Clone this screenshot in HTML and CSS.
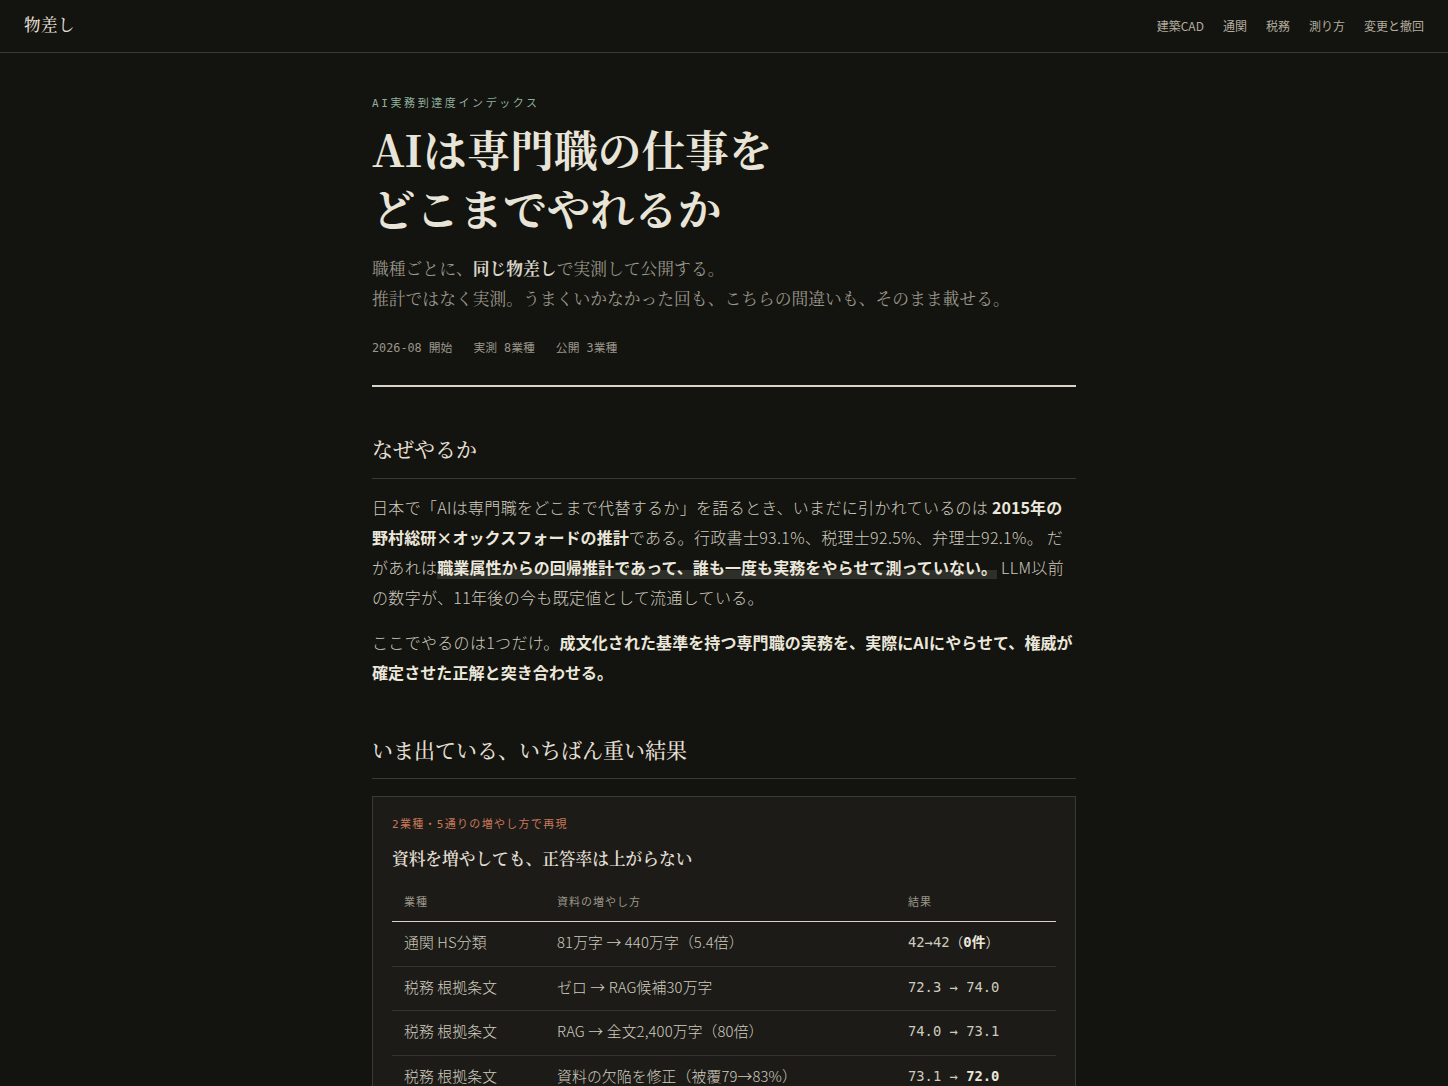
FILE: index.html
```html
<!DOCTYPE html>
<html lang="ja">
<head>
<meta charset="utf-8">
<title>物差し</title>
<link rel="stylesheet" href="styles.css">
</head>
<body>
<header class="site-header">
  <div class="logo">物差し</div>
  <nav class="nav">
    <a href="#">建築CAD</a>
    <a href="#">通関</a>
    <a href="#">税務</a>
    <a href="#">測り方</a>
    <a href="#">変更と撤回</a>
  </nav>
</header>
<main class="main">
  <section class="hero">
    <p class="eyebrow">AI実務到達度インデックス</p>
    <h1 class="title">AIは専門職の仕事を<br>どこまでやれるか</h1>
    <p class="lead">職種ごとに、<strong>同じ物差し</strong>で実測して公開する。<br>推計ではなく実測。うまくいかなかった回も、こちらの間違いも、そのまま載せる。</p>
    <div class="meta"><span>2026-08 開始</span><span>実測 8業種</span><span>公開 3業種</span></div>
  </section>

  <section class="section">
    <h2 class="section-title">なぜやるか</h2>
    <p class="body">日本で「AIは専門職をどこまで代替するか」を語るとき、いまだに引かれているのは <strong>2015年の野村総研×オックスフォードの推計</strong>である。行政書士93.1%、税理士92.5%、弁理士92.1%。 だがあれは<strong class="mark">職業属性からの回帰推計であって、誰も一度も実務をやらせて測っていない。</strong> LLM以前の数字が、11年後の今も既定値として流通している。</p>
    <p class="body">ここでやるのは1つだけ。<strong>成文化された基準を持つ専門職の実務を、実際にAIにやらせて、権威が確定させた正解と突き合わせる。</strong></p>
  </section>

  <section class="section">
    <h2 class="section-title">いま出ている、いちばん重い結果</h2>
    <div class="card">
      <p class="card-label">2業種・5通りの増やし方で再現</p>
      <h3 class="card-title">資料を増やしても、正答率は上がらない</h3>
      <table class="table">
        <thead>
          <tr><th class="c1">業種</th><th class="c2">資料の増やし方</th><th class="c3">結果</th></tr>
        </thead>
        <tbody>
          <tr><td>通関 HS分類</td><td>81万字 → 440万字（5.4倍）</td><td class="num">42→42（<b>0件</b>）</td></tr>
          <tr><td>税務 根拠条文</td><td>ゼロ → RAG候補30万字</td><td class="num">72.3 → 74.0</td></tr>
          <tr><td>税務 根拠条文</td><td>RAG → 全文2,400万字（80倍）</td><td class="num">74.0 → 73.1</td></tr>
          <tr><td>税務 根拠条文</td><td>資料の欠陥を修正（被覆79→83%）</td><td class="num">73.1 → <b>72.0</b></td></tr>
          <tr><td>税務 根拠条文</td><td>全文検索の上位を追加</td><td class="num">72.0 → 71.4</td></tr>
        </tbody>
      </table>
    </div>
  </section>
</main>
</body>
</html>
```

FILE: styles.css
```css
* { box-sizing: border-box; }
html, body { margin: 0; padding: 0; }
body {
  background: #13130f;
  color: #d6d2c6;
  font-family: "Noto Sans CJK JP", "Noto Sans", sans-serif;
}
a { text-decoration: none; color: inherit; }

.site-header {
  height: 53px;
  border-bottom: 1px solid #3a3a34;
  display: flex;
  align-items: center;
  justify-content: space-between;
  padding: 0 24px;
}
.logo {
  font-family: "Noto Serif CJK JP", serif;
  font-weight: 500;
  font-size: 16.5px;
  color: #e2ded2;
  letter-spacing: 0.5px;
  margin-top: -5px;
}
.nav {
  display: flex;
  gap: 19px;
  font-size: 12px;
  color: #b2ad9f;
  margin-top: -1px;
}

.main {
  width: 704px;
  margin: 0 auto;
  padding-top: 42px;
}
.eyebrow {
  margin: 0;
  font-family: "DejaVu Sans Mono", "Noto Sans CJK JP", monospace;
  font-size: 11px;
  letter-spacing: 2.6px;
  color: #8fae9c;
  line-height: 18px;
}
.title {
  margin: 6px 0 0;
  font-family: "Noto Serif CJK JP", "Liberation Serif", serif;
  font-weight: 700;
  font-size: 43.7px;
  line-height: 59px;
  color: #e8e4d8;
}
.lead {
  margin: 16px 0 0;
  font-family: "Noto Serif CJK JP", serif;
  font-weight: 400;
  font-size: 16.8px;
  line-height: 30px;
  color: #9a968a;
}
.lead strong { color: #d8d4c8; font-weight: 700; }
.meta {
  margin-top: 25px;
  display: flex;
  gap: 21px;
  font-family: "DejaVu Sans Mono", "Noto Sans CJK JP", monospace;
  font-size: 11.8px;
  color: #9a968a;
  padding-bottom: 30px;
  border-bottom: 2px solid #d8d4c6;
}

.section { margin-top: 46px; }
.section + .section { margin-top: 47px; }
.section-title {
  margin: 0;
  font-family: "Noto Serif CJK JP", serif;
  font-weight: 500;
  font-size: 21px;
  line-height: 30px;
  color: #e2ded2;
  padding-bottom: 14.5px;
  border-bottom: 1px solid #3a3a34;
}
.body {
  margin: 13px 0 0;
  font-size: 16px;
  line-height: 30px;
  color: #cfcbbf;
  font-weight: 300;
  letter-spacing: 0.02em;
}
.body + .body { margin-top: 15px; }
.body strong {
  font-weight: 700;
  color: #ebe7db;
  letter-spacing: 0.005em;
}
.body .mark {
  background: linear-gradient(transparent 62%, #2f2f29 62%);
}

.card {
  margin-top: 17px;
  background: #1c1b17;
  border: 1px solid #3a3934;
  padding: 20px 19px 0;
}
.card-label {
  margin: 0;
  font-family: "DejaVu Sans Mono", "Noto Sans CJK JP", monospace;
  font-size: 11px;
  letter-spacing: 1.3px;
  color: #c8785a;
  line-height: 16px;
}
.card-title {
  margin: 13px 0 0;
  font-family: "Noto Serif CJK JP", serif;
  font-weight: 600;
  font-size: 16.7px;
  line-height: 24px;
  color: #e2ded2;
}
.table {
  margin-top: 17px;
  width: 100%;
  border-collapse: collapse;
}
.table th {
  text-align: left;
  font-weight: 400;
  font-size: 11px;
  letter-spacing: 1px;
  color: #9a968a;
  padding: 6px 12px 12px;
  border-bottom: 1.5px solid #d8d4c6;
}
.table th.c1 { width: 153px; }
.table th.c3 { width: 160px; }
.table td {
  font-size: 14.8px;
  font-weight: 300;
  letter-spacing: 0.01em;
  line-height: 22px;
  color: #cfcbbf;
  padding: 9px 12px 12.5px;
  border-bottom: 1px solid #34332e;
}
.table td.num {
  font-family: "DejaVu Sans Mono", "Noto Sans CJK JP", monospace;
  font-size: 13.8px;
  font-weight: 400;
  letter-spacing: 0;
}
.table td b { font-weight: 700; color: #ebe7db; }
```
